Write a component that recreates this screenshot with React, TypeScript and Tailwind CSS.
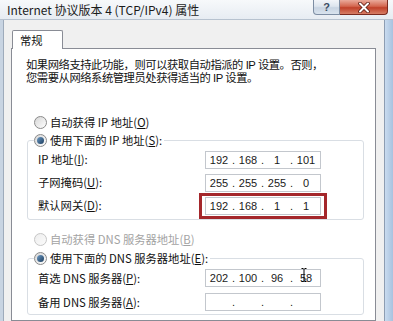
import React from "react";

const Radio = ({ checked = false, disabled = false }: { checked?: boolean; disabled?: boolean }) => (
  <span
    className={
      "relative inline-flex w-[13px] h-[13px] shrink-0 rounded-full border items-center justify-center " +
      (disabled
        ? "border-[#c6c6c6] bg-gradient-to-br from-[#eeeeee] to-[#fbfbfb]"
        : "border-[#8a8a8a] bg-gradient-to-br from-[#d6d6d6] to-[#ffffff]")
    }
  >
    {checked && (
      <span className="w-[7px] h-[7px] rounded-full bg-gradient-to-br from-[#6f9cc6] to-[#1c3d5e]" />
    )}
  </span>
);

const Seg = ({ v, caret = false }: { v: string; caret?: boolean }) => (
  <span className="relative w-[26px] text-center">
    {v}
    {caret && (
      <svg className="absolute left-[8px] top-[-2px]" width="6" height="14" viewBox="0 0 6 14">
        <path d="M0.5 0.5h2M3.5 0.5h2M3 1v12M0.5 13.5h2M3.5 13.5h2" stroke="#000" strokeWidth="1" fill="none" />
      </svg>
    )}
  </span>
);

const Dot = () => <span className="w-[3px] text-center">.</span>;

const IpField = ({ parts, caret = false }: { parts: string[]; caret?: boolean }) => (
  <div className="w-[116px] h-[18px] border border-[#c3c7cd] bg-white flex items-center font-['Liberation_Sans',sans-serif] text-[11px] leading-[16px] text-[#1a1a1a]">
    <Seg v={parts[0]} />
    <Dot />
    <Seg v={parts[1]} />
    <Dot />
    <Seg v={parts[2]} />
    <Dot />
    <Seg v={parts[3]} caret={caret} />
  </div>
);

const U = ({ children }: { children: React.ReactNode }) => <span className="underline underline-offset-1">{children}</span>;

export default function App() {
  return (
    <div className="w-[393px] h-[321px] overflow-hidden flex flex-col bg-[#dfe6ee] font-['Noto_Sans_CJK_SC',sans-serif] text-[11.3px] text-[#111]">
      {/* title bar */}
      <div className="h-[20px] shrink-0 flex items-start bg-gradient-to-b from-[#f7f9fb] to-[#e7ecf2] border-b border-[#b7c2cf]">
        <div className="flex-1 pl-[7px] pt-[3px] text-[12px] leading-[14px] text-[#1b1b1b] whitespace-nowrap">
          Internet 协议版本 4 (TCP/IPv4) 属性
        </div>
        <div className="flex mr-[5px]">
          <div className="w-[27px] h-[15px] border border-t-0 border-[#7d8da3] rounded-bl-[4px] bg-[linear-gradient(#f2f5f9,#dde5ee_45%,#c8d4e2_55%,#d9e3ee)] flex items-center justify-center text-[11px] leading-none font-bold text-[#3b4c63] font-['Liberation_Sans',sans-serif]">
            ?
          </div>
          <div className="w-[48px] h-[15px] border border-t-0 border-l-0 border-[#7a2a1f] rounded-br-[4px] bg-[linear-gradient(#eaaa9b,#d3664f_45%,#c0412a_55%,#d77e66)] flex items-center justify-center">
            <svg width="14" height="11" viewBox="0 0 14 11">
              <path d="M3 1.5L11 9.5M11 1.5L3 9.5" stroke="#5a1a12" strokeWidth="3.6" strokeLinecap="round" />
              <path d="M3 1.5L11 9.5M11 1.5L3 9.5" stroke="#ffffff" strokeWidth="2" strokeLinecap="round" />
            </svg>
          </div>
        </div>
      </div>

      <div className="flex flex-1 min-h-0">
        <div className="w-[4px] shrink-0 bg-[#c8d4e2] border-r border-[#9eabbb]" />
        <div className="flex-1 bg-[#f0f0f0] flex flex-col pl-[7px] pr-[8px] pt-[10px]">
          {/* tab */}
          <div className="relative z-10 ml-[1px] -mb-px w-[51px] h-[19px] border border-b-0 border-[#898c95] rounded-t-[2px] bg-white pl-[7px] leading-[18px]">
            常规
          </div>
          {/* panel */}
          <div className="flex-1 border border-[#898c95] bg-white flex flex-col pl-[14px] pt-[10px]">
            <p className="leading-[13px] whitespace-nowrap tracking-[-0.45px] font-['Liberation_Sans','Noto_Sans_CJK_SC',sans-serif]">
              如果网络支持此功能，则可以获取自动指派的 IP 设置。否则，
              <br />
              您需要从网络系统管理员处获得适当的 IP 设置。
            </p>

            <div className="mt-[29px] h-[16px] flex items-center gap-[3px] ml-[8px] whitespace-nowrap">
              <Radio />
              <span>
                自动获得 IP 地址(<U>O</U>)
              </span>
            </div>

            <fieldset className="mt-[2px] ml-[1px] mr-[11px] border border-[#d9dee4] rounded-[3px] pl-[10px] pb-[2px]">
              <legend className="-ml-[4px] pr-[2px] h-[16px] flex items-center gap-[3px] whitespace-nowrap">
                <Radio checked />
                <span>
                  使用下面的 IP 地址(<U>S</U>):
                </span>
              </legend>
              <div className="flex flex-col">
                <div className="h-[23px] flex items-center">
                  <span className="w-[167px]">
                    IP 地址(<U>I</U>):
                  </span>
                  <IpField parts={["192", "168", "1", "101"]} />
                </div>
                <div className="h-[23px] flex items-center">
                  <span className="w-[167px]">
                    子网掩码(<U>U</U>):
                  </span>
                  <IpField parts={["255", "255", "255", "0"]} />
                </div>
                <div className="h-[23px] flex items-center">
                  <span className="w-[167px]">
                    默认网关(<U>D</U>):
                  </span>
                  <div className="relative">
                    <IpField parts={["192", "168", "1", "1"]} />
                    <div className="absolute -left-[6px] -right-[6px] -top-[4px] -bottom-[4px] border-[3px] border-[#a4272b]" />
                  </div>
                </div>
              </div>
            </fieldset>

            <div className="mt-[11px] h-[16px] flex items-center gap-[3px] ml-[8px] whitespace-nowrap text-[#a3a3a3]">
              <Radio disabled />
              <span>
                自动获得 DNS 服务器地址(<U>B</U>)
              </span>
            </div>

            <fieldset className="mt-[3px] ml-[1px] mr-[11px] border border-[#d9dee4] rounded-[3px] pl-[10px]">
              <legend className="-ml-[4px] pr-[2px] h-[16px] flex items-center gap-[3px] whitespace-nowrap">
                <Radio checked />
                <span>
                  使用下面的 DNS 服务器地址(<U>E</U>):
                </span>
              </legend>
              <div className="flex flex-col">
                <div className="h-[24px] flex items-center">
                  <span className="w-[167px]">
                    首选 DNS 服务器(<U>P</U>):
                  </span>
                  <IpField parts={["202", "100", "96", "58"]} caret />
                </div>
                <div className="h-[24px] flex items-center">
                  <span className="w-[167px]">
                    备用 DNS 服务器(<U>A</U>):
                  </span>
                  <IpField parts={["", "", "", ""]} />
                </div>
              </div>
            </fieldset>
          </div>
        </div>
        <div className="w-[9px] shrink-0 border-l border-[#8d9db2] bg-gradient-to-r from-[#c9dbef] to-[#a8c2df]" />
      </div>
    </div>
  );
}
